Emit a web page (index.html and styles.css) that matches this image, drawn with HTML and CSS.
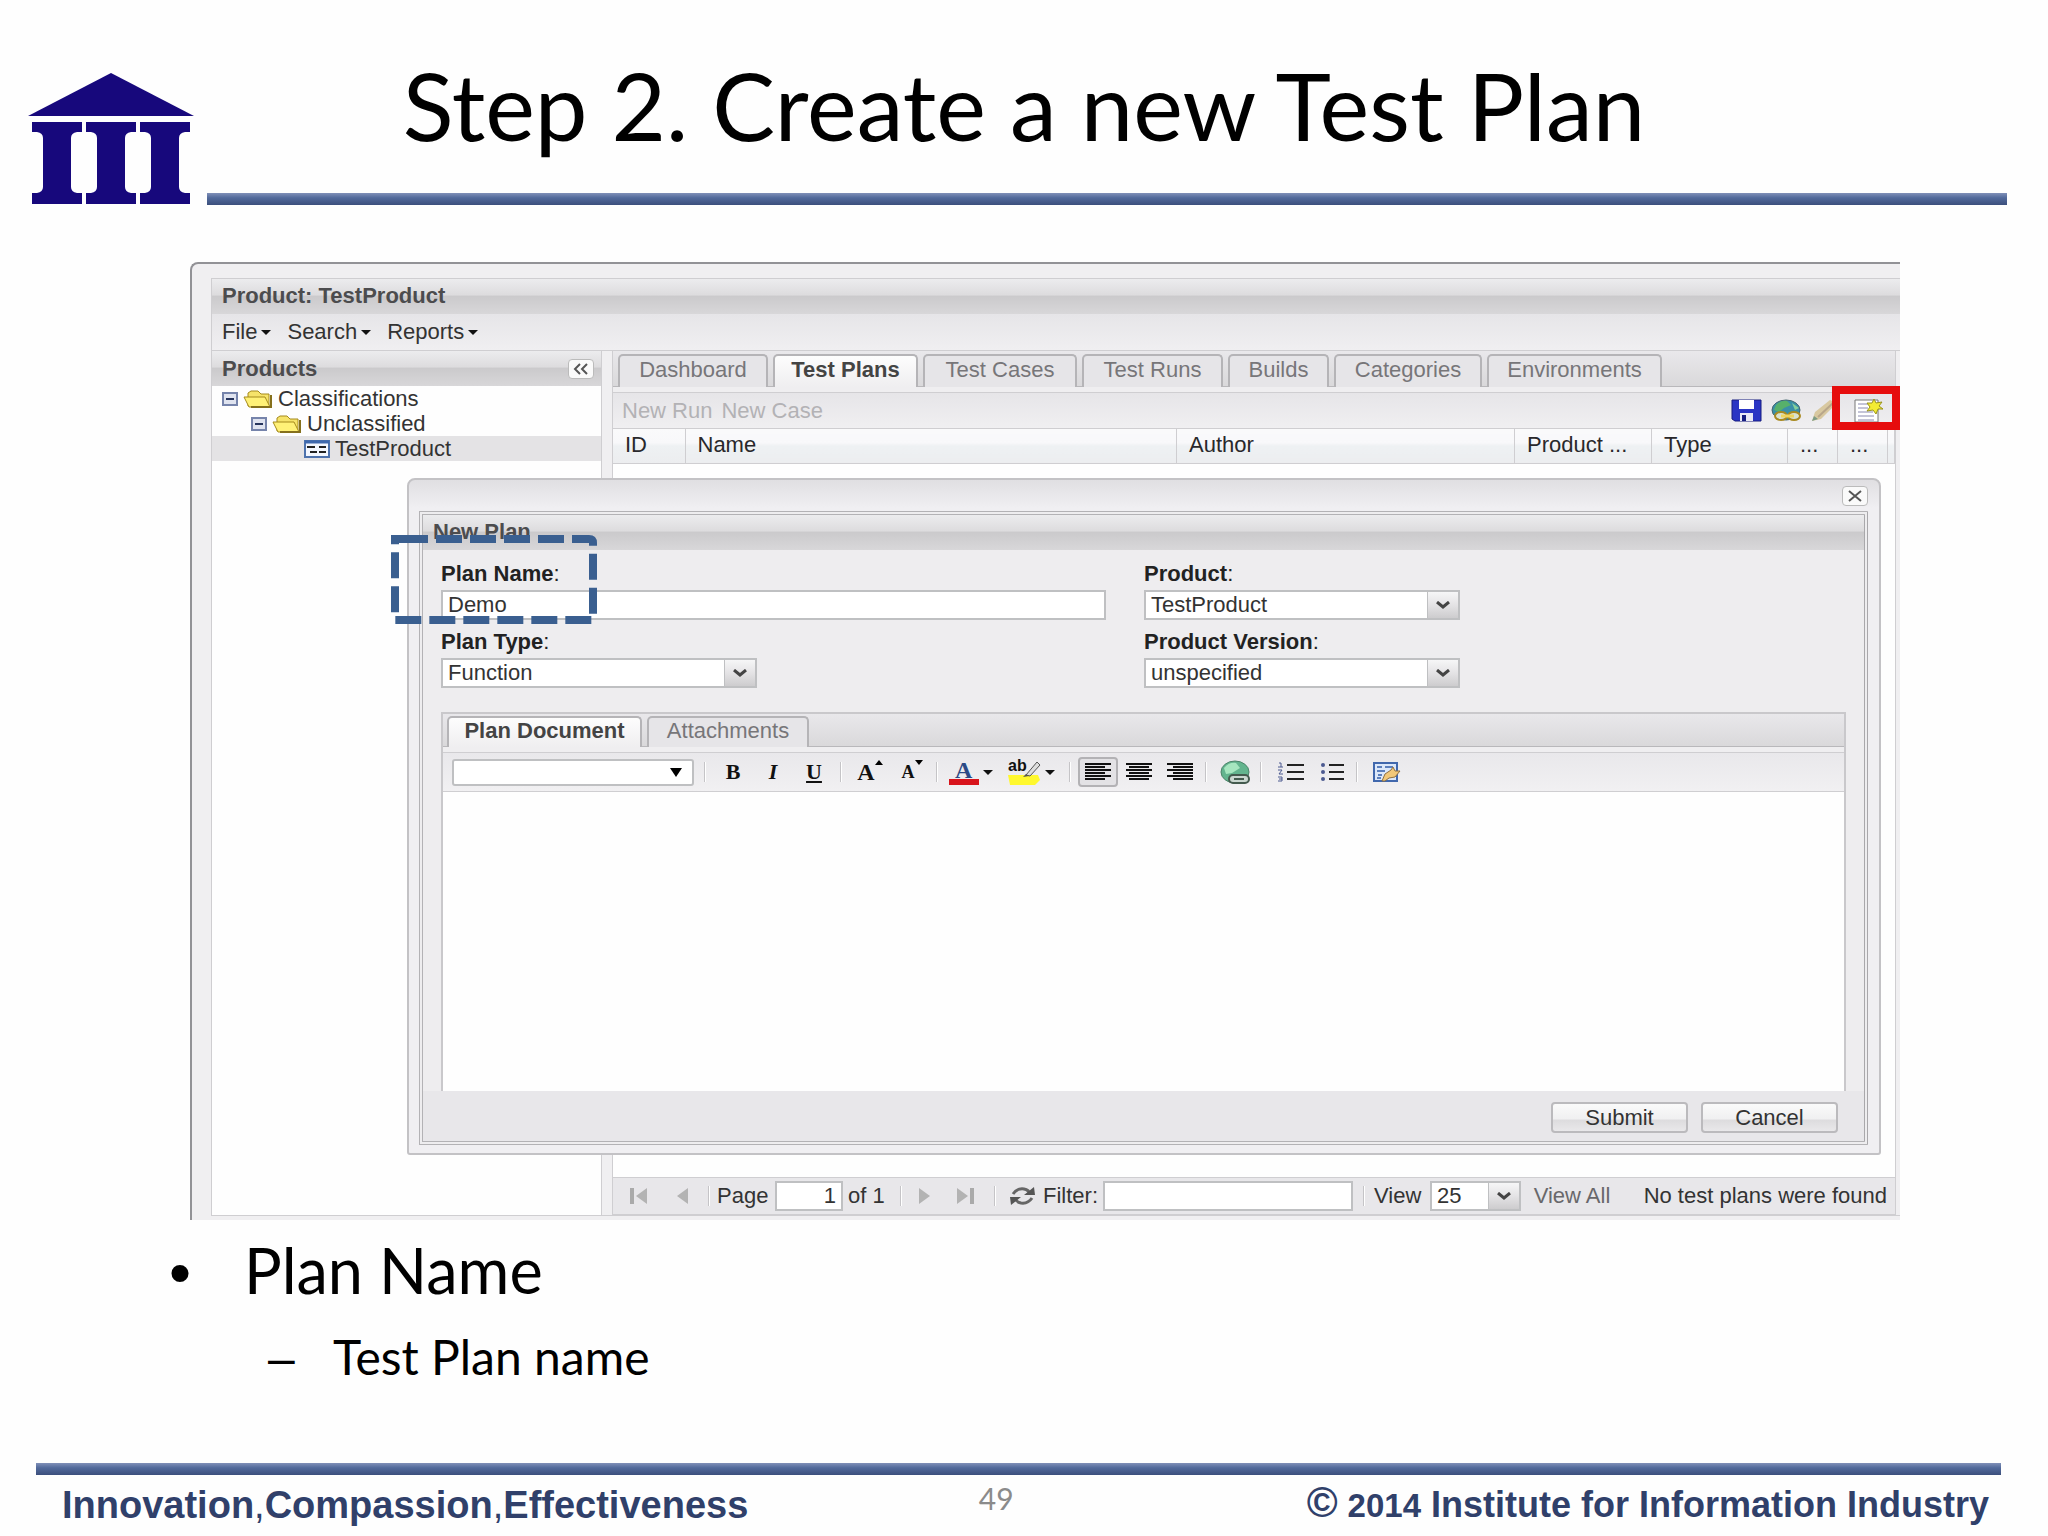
FILE: index.html
```html
<!DOCTYPE html>
<html lang="en">
<head>
    <meta charset="UTF-8">
    <meta name="viewport" content="width=device-width, initial-scale=1.0">
    <title>Step 2. Create a new Test Plan</title>
    <link rel="stylesheet" href="styles.css">
</head>
<body>
    <div class="slide">
        <header class="slide-header">
            <svg class="logo" viewBox="0 0 166 132" aria-label="III">
                <g fill="#17087c">
                    <path d="M83 0L166 43H0Z"/>
                    <path id="pillar" d="M4 49H54V59H49Q43 60 43 65V114Q43 119 49 120H54V131H4V120H9Q15 119 15 114V65Q15 60 9 59H4Z"/>
                    <use href="#pillar" x="54"/>
                    <use href="#pillar" x="108"/>
                </g>
            </svg>
            <h1>Step 2. Create a new Test Plan</h1>
            <div class="rule"></div>
        </header>

        <main class="app">
            <div class="app-inner">
                <h2 class="bar">Product: TestProduct</h2>
                <nav class="menu">
                    <button>File<i class="caret"></i></button>
                    <button>Search<i class="caret"></i></button>
                    <button>Reports<i class="caret"></i></button>
                </nav>
                <div class="columns">
                    <aside class="products">
                        <div class="bar products-bar">
                            <h3>Products</h3>
                            <button class="tool" aria-label="Collapse">
                                <svg width="16" height="14" viewBox="0 0 16 14"><path d="M7 2L2 7L7 12M14 2L9 7L14 12" fill="none" stroke="#555" stroke-width="2"/></svg>
                            </button>
                        </div>
                        <ul class="tree">
                            <li class="level-1">
                                <svg class="minus" width="16" height="14" viewBox="0 0 16 14"><path d="M1 1H15V13H1Z" fill="#dfe3ef" stroke="#7684ab" stroke-width="2"/><path d="M4 7H12" stroke="#26345c" stroke-width="2"/></svg>
                                <svg width="30" height="18" viewBox="0 0 30 18"><path d="M5 16V3L8 1H15L18 4H26V16Z" fill="#f6e36a" stroke="#a58a1c"/><path d="M1 7H22L27 17H6Z" fill="#fff177" stroke="#a58a1c"/><path d="M28 5V17H8" fill="none" stroke="#85701c" stroke-width="2"/></svg>
                                Classifications
                            </li>
                            <li class="level-2">
                                <svg class="minus" width="16" height="14" viewBox="0 0 16 14"><path d="M1 1H15V13H1Z" fill="#dfe3ef" stroke="#7684ab" stroke-width="2"/><path d="M4 7H12" stroke="#26345c" stroke-width="2"/></svg>
                                <svg width="30" height="18" viewBox="0 0 30 18"><path d="M5 16V3L8 1H15L18 4H26V16Z" fill="#f6e36a" stroke="#a58a1c"/><path d="M1 7H22L27 17H6Z" fill="#fff177" stroke="#a58a1c"/><path d="M28 5V17H8" fill="none" stroke="#85701c" stroke-width="2"/></svg>
                                Unclassified
                            </li>
                            <li class="level-3 selected">
                                <svg width="26" height="18" viewBox="0 0 26 18"><path d="M1 1H25V17H1Z" fill="#f3f7ff" stroke="#4d72ad" stroke-width="2"/><path d="M1 2H25" stroke="#3e68ad" stroke-width="3"/><path d="M3 7H11M6 12H13M15 7H22M15 12H22" stroke="#222" stroke-width="2"/></svg>
                                TestProduct
                            </li>
                        </ul>
                    </aside>

                    <section class="plans">
                        <div class="tabs">
                            <button>Dashboard</button>
                            <button class="active">Test Plans</button>
                            <button>Test Cases</button>
                            <button>Test Runs</button>
                            <button>Builds</button>
                            <button>Categories</button>
                            <button>Environments</button>
                        </div>
                        <div class="toolbar">
                            <button disabled>New Run</button>
                            <button disabled>New Case</button>
                            <span class="spacer"></span>
                            <button class="icon" aria-label="Save">
                                <svg width="31" height="23" viewBox="0 0 31 23"><path d="M1 1H30V22H4L1 20Z" fill="#2a35c4" stroke="#161d80"/><path d="M8 1H23V10H8Z" fill="#fff"/><path d="M9 14H22V22H9Z" fill="#e9e9f5"/><path d="M11 16H15V22H11Z" fill="#161d80"/></svg>
                            </button>
                            <button class="icon" aria-label="Link">
                                <svg width="31" height="23" viewBox="0 0 31 23"><ellipse cx="15" cy="11" rx="14" ry="10" fill="#3a8fa6" stroke="#44666e"/><path d="M5 6Q10 1 16 2L20 6L13 9L8 13L3 11Z" fill="#57b06a"/><path d="M21 4L28 9L24 11Z" fill="#85d09a"/><g fill="#d9e2d0" stroke="#a98920" stroke-width="2"><ellipse cx="10" cy="17" rx="6" ry="4"/><ellipse cx="23" cy="17" rx="6" ry="4"/></g><path d="M10 17H23" stroke="#efd45c" stroke-width="3"/></svg>
                            </button>
                            <button class="icon" aria-label="Edit">
                                <svg width="27" height="23" viewBox="0 0 27 23"><path d="M1 22L4 13L19 1L26 4L10 20Z" fill="#d8c8a0"/><path d="M1 22L3 17L7 20Z" fill="#7c9c86"/><path d="M7 18L22 4" stroke="#b8a68a" stroke-width="2"/></svg>
                            </button>
                            <button class="icon" aria-label="New plan">
                                <svg width="30" height="24" viewBox="0 0 30 24"><path d="M2 1H25V23H2Z" fill="#fff" stroke="#777"/><path d="M5 5H15M5 9H15M5 13H20M5 17H21M5 21H21" stroke="#8a8ab0"/><path d="M21 0L23 4L29 3L26 7L30 10L25 10L23 15L20 11L14 12L17 8L14 4L19 4Z" fill="#f3ec33" stroke="#99921c"/></svg>
                            </button>
                        </div>
                        <table class="grid">
                            <thead>
                                <tr>
                                    <th class="col-id">ID</th>
                                    <th>Name</th>
                                    <th class="col-author">Author</th>
                                    <th class="col-product">Product ...</th>
                                    <th class="col-type">Type</th>
                                    <th class="col-more">...</th>
                                    <th class="col-more">...</th>
                                    <th class="col-end"></th>
                                </tr>
                            </thead>
                        </table>
                        <div class="pager">
                            <button aria-label="First page"><svg width="18" height="16" viewBox="0 0 18 16"><path d="M2 0V16" stroke="#aaa" stroke-width="4"/><path d="M17 0V16L6 8Z" fill="#b3b3b3"/></svg></button>
                            <button aria-label="Previous page"><svg width="12" height="16" viewBox="0 0 12 16"><path d="M11 0V16L0 8Z" fill="#b3b3b3"/></svg></button>
                            <span class="sep"></span>
                            <label for="page">Page</label>
                            <input id="page" class="page" type="text" value="1">
                            <span class="of">of 1</span>
                            <span class="sep"></span>
                            <button aria-label="Next page"><svg width="12" height="16" viewBox="0 0 12 16"><path d="M1 0V16L12 8Z" fill="#b3b3b3"/></svg></button>
                            <button aria-label="Last page"><svg width="18" height="16" viewBox="0 0 18 16"><path d="M16 0V16" stroke="#aaa" stroke-width="4"/><path d="M1 0V16L12 8Z" fill="#b3b3b3"/></svg></button>
                            <span class="sep"></span>
                            <button aria-label="Refresh"><svg width="27" height="20" viewBox="0 0 27 20"><g fill="none" stroke="#666" stroke-width="3"><path d="M4 8Q8 2 15 3Q20 4 21 8"/><path d="M23 12Q19 18 12 17Q7 16 6 12"/></g><path d="M15 9H26L25 1Z" fill="#555"/><path d="M12 11H1L2 19Z" fill="#555"/></svg></button>
                            <label for="filter">Filter:</label>
                            <input id="filter" type="text">
                            <span class="sep"></span>
                            <label for="view">View</label>
                            <div class="combo">
                                <select id="view"><option>25</option></select>
                                <span class="trigger"><svg width="16" height="9" viewBox="0 0 16 9"><path d="M2 1L8 6L14 1" fill="none" stroke="#444" stroke-width="3"/></svg></span>
                            </div>
                            <button class="view-all">View All</button>
                            <span class="status">No test plans were found</span>
                        </div>
                    </section>
                </div>
            </div>

            <div class="dialog" role="dialog" aria-labelledby="dialog-title">
                <div class="dialog-head">
                    <button class="tool" aria-label="Close">
                        <svg width="14" height="12" viewBox="0 0 14 12"><path d="M1 1L13 11M13 1L1 11" stroke="#555" stroke-width="2"/></svg>
                    </button>
                </div>
                <form class="dialog-body">
                    <h2 class="bar" id="dialog-title">New Plan</h2>
                    <div class="fields">
                        <div class="field">
                            <label for="plan-name"><b>Plan Name</b>:</label>
                            <input id="plan-name" type="text" value="Demo">
                        </div>
                        <div class="field">
                            <label for="product"><b>Product</b>:</label>
                            <div class="combo">
                                <select id="product"><option>TestProduct</option></select>
                                <span class="trigger"><svg width="16" height="9" viewBox="0 0 16 9"><path d="M2 1L8 6L14 1" fill="none" stroke="#444" stroke-width="3"/></svg></span>
                            </div>
                        </div>
                        <div class="field">
                            <label for="plan-type"><b>Plan Type</b>:</label>
                            <div class="combo">
                                <select id="plan-type"><option>Function</option></select>
                                <span class="trigger"><svg width="16" height="9" viewBox="0 0 16 9"><path d="M2 1L8 6L14 1" fill="none" stroke="#444" stroke-width="3"/></svg></span>
                            </div>
                        </div>
                        <div class="field">
                            <label for="version"><b>Product Version</b>:</label>
                            <div class="combo">
                                <select id="version"><option>unspecified</option></select>
                                <span class="trigger"><svg width="16" height="9" viewBox="0 0 16 9"><path d="M2 1L8 6L14 1" fill="none" stroke="#444" stroke-width="3"/></svg></span>
                            </div>
                        </div>
                    </div>

                    <div class="document">
                        <div class="tabs">
                            <button type="button" class="active">Plan Document</button>
                            <button type="button">Attachments</button>
                        </div>
                        <div class="editor-bar">
                            <div class="font-combo">
                                <select aria-label="Font"><option></option></select>
                                <svg width="12" height="9" viewBox="0 0 12 9"><path d="M0 0H12L6 9Z"/></svg>
                            </div>
                            <span class="sep"></span>
                            <button type="button" class="letter">B</button>
                            <button type="button" class="letter"><em>I</em></button>
                            <button type="button" class="letter"><u>U</u></button>
                            <span class="sep"></span>
                            <button type="button" class="letter big" aria-label="Grow font">A<svg width="8" height="5" viewBox="0 0 8 5"><path d="M0 5H8L4 0Z"/></svg></button>
                            <button type="button" class="letter small" aria-label="Shrink font">A<svg width="8" height="5" viewBox="0 0 8 5"><path d="M0 0H8L4 5Z"/></svg></button>
                            <span class="sep"></span>
                            <button type="button" aria-label="Font color">
                                <svg width="30" height="30" viewBox="0 0 30 30"><text x="6" y="21" class="glyph-serif">A</text><path d="M0 22H30V28H0Z" fill="#d8141c"/></svg><i class="caret"></i>
                            </button>
                            <button type="button" aria-label="Highlight color">
                                <svg width="33" height="32" viewBox="0 0 33 32"><path d="M0 19H30L32 24L27 29H2Z" fill="#fff82e"/><text x="0" y="15" class="glyph-sans">ab</text><path d="M18 19L29 6L32 9L22 20Z" fill="#ddd" stroke="#555"/><path d="M15 21L18 18L21 20Z" fill="#555"/></svg><i class="caret"></i>
                            </button>
                            <span class="sep"></span>
                            <button type="button" class="pressed" aria-label="Align left"><svg width="26" height="18" viewBox="0 0 26 18"><path d="M0 1H26M0 4H20M0 7H26M0 10H20M0 13H26M0 16H20" stroke="#111" stroke-width="2"/></svg></button>
                            <button type="button" aria-label="Align center"><svg width="26" height="18" viewBox="0 0 26 18"><path d="M0 1H26M3 4H23M0 7H26M3 10H23M0 13H26M3 16H23" stroke="#111" stroke-width="2"/></svg></button>
                            <button type="button" aria-label="Align right"><svg width="26" height="18" viewBox="0 0 26 18"><path d="M0 1H26M6 4H26M0 7H26M6 10H26M0 13H26M6 16H26" stroke="#111" stroke-width="2"/></svg></button>
                            <span class="sep"></span>
                            <button type="button" aria-label="Insert link"><svg width="30" height="24" viewBox="0 0 30 24"><ellipse cx="15" cy="12" rx="14" ry="11" fill="#63b48e" stroke="#4b8469"/><path d="M4 8Q9 2 16 3L20 8L12 13L6 14Z" fill="#a6e6bf"/><rect x="9" y="15" width="20" height="8" rx="4" fill="#c9d6cf" stroke="#445a4e" stroke-width="2"/><path d="M14 19H24" stroke="#445a4e" stroke-width="2"/></svg></button>
                            <span class="sep"></span>
                            <button type="button" aria-label="Numbered list"><svg width="27" height="20" viewBox="0 0 27 20"><path d="M10 3H27M10 10H27M10 17H27" stroke="#222" stroke-width="2"/><path d="M2 1H4V5M1 5H6M1 8H5L2 12H6M1 15H5V19H1M2 17H5" fill="none" stroke="#4c5a90"/></svg></button>
                            <button type="button" aria-label="Bulleted list"><svg width="24" height="20" viewBox="0 0 24 20"><path d="M9 3H24M9 10H24M9 17H24" stroke="#222" stroke-width="2"/><g fill="#4c5a90"><circle cx="3" cy="3" r="2"/><circle cx="3" cy="10" r="2"/><circle cx="3" cy="17" r="2"/></g></svg></button>
                            <span class="sep"></span>
                            <button type="button" aria-label="Edit source"><svg width="28" height="20" viewBox="0 0 28 20"><path d="M1 1H24V19H1Z" fill="#dce8fa" stroke="#4168ad" stroke-width="2"/><path d="M4 5H9M12 5H20M4 9H12M5 13H9M4 16H8" stroke="#5d80bd" stroke-width="2"/><path d="M9 19L12 12L18 8L20 5L22 9L27 9L22 15L16 16L12 19Z" fill="#f2c878" stroke="#8f7040"/></svg></button>
                        </div>
                        <textarea aria-label="Plan document"></textarea>
                    </div>
                    <div class="actions">
                        <button type="button">Submit</button>
                        <button type="button">Cancel</button>
                    </div>
                </form>
            </div>

            <!-- callouts drawn over the application -->
            <div class="callout-new"></div>
            <svg class="callout-name" viewBox="0 0 206 90">
                <path d="M11 4H198Q202 4 202 8V85H4V4H11" fill="none" stroke="#3a5f90" stroke-width="8" stroke-dasharray="26 8"/>
            </svg>
        </main>

        <ul class="notes">
            <li>Plan Name
                <ul>
                    <li>Test Plan name</li>
                </ul>
            </li>
        </ul>

        <footer class="slide-footer">
            <div class="rule"></div>
            <div class="footer-row">
                <p class="motto">Innovation<span>,</span>Compassion<span>,</span>Effectiveness</p>
                <p class="number">49</p>
                <p class="owner"><span class="copy">©</span> <span class="year">2014</span> Institute for Information Industry</p>
            </div>
        </footer>
    </div>
</body>
</html>
```
FILE: styles.css
```css
* {
    box-sizing: border-box;
}

body {
    margin: 0;
    background-color: #fefefe;
    color: #000;
    font-family: Lato, sans-serif;
}

h1, h2, h3, p, ul {
    margin: 0;
    padding: 0;
}

svg {
    display: block;
    flex: none;
}

.slide {
    display: flex;
    flex-direction: column;
    min-height: 100vh;
}

.slide-header {
    display: grid;
    grid-template-columns: 166px 1fr 153px;
    grid-template-rows: 193px 12px;
    column-gap: 13px;
    padding: 0 41px 0 28px;
}

.logo {
    grid-row: 1 / 3;
    align-self: end;
    width: 100%;
}

.slide-header h1 {
    padding-top: 52px;
    font-size: 94px;
    line-height: 106px;
    font-weight: 400;
    text-align: center;
    white-space: nowrap;
}

.rule {
    height: 12px;
    background: linear-gradient(#8090b8, #526a9b 40%, #3c4f7c);
}

.slide-header .rule {
    grid-column: 2 / 4;
}

/* application */
.app {
    position: relative;
    flex: 1;
    display: flex;
    margin: 57px 148px 0 190px;
    padding: 14px 0 4px 19px;
    border: solid #929296;
    border-width: 2px 0 0 2px;
    border-top-left-radius: 8px;
    background-color: #f0eff1;
    color: #333;
    font-family: "Liberation Sans", sans-serif;
    font-size: 22px;
    line-height: 24px;
    overflow: hidden;
}

.app button,
.app input,
.app select,
.app textarea {
    margin: 0;
    padding: 0;
    border: none;
    border-radius: 0;
    background: none;
    color: inherit;
    font: inherit;
}

.app button {
    display: flex;
    align-items: center;
    justify-content: center;
    white-space: nowrap;
}

.app-inner {
    flex: 1;
    display: flex;
    flex-direction: column;
    border: 1px solid #cfced1;
    border-right: none;
}

.bar {
    height: 35px;
    padding-left: 10px;
    background: linear-gradient(#ececee, #dddcde 45%, #cbcacc 50%, #d8d7d9);
    color: #4c4c4e;
    font-size: 22px;
    line-height: 34px;
    font-weight: 700;
}

.menu {
    display: flex;
    gap: 16px;
    height: 37px;
    padding-left: 10px;
    background: linear-gradient(#e6e5e8, #f0eff1);
    border-bottom: 1px solid #cfced1;
}

.caret {
    margin-left: 4px;
    border: 5px solid transparent;
    border-top-color: #111;
    border-bottom: none;
}

.columns {
    flex: 1;
    display: flex;
    gap: 10px;
}

.products {
    width: 390px;
    background-color: #fefefe;
    border-right: 1px solid #cfced1;
}

.products-bar {
    display: flex;
    align-items: center;
    justify-content: space-between;
    padding-right: 7px;
}

.products-bar h3 {
    font-size: 22px;
}

.app .tool {
    width: 26px;
    height: 20px;
    border: 1px solid #bbb;
    border-radius: 4px;
    background-color: #fafafa;
}

.tree {
    list-style: none;
}

.tree li {
    display: flex;
    align-items: center;
    gap: 5px;
    height: 25px;
}

.level-1 {
    padding-left: 10px;
}

.level-2 {
    padding-left: 39px;
}

.level-3 {
    padding-left: 92px;
}

.selected {
    background-color: #e4e3e5;
}

.plans {
    flex: 1;
    display: flex;
    flex-direction: column;
    margin-right: 4px;
    border: solid #cfced1;
    border-width: 0 1px;
    background-color: #fefefe;
}

.tabs {
    display: grid;
    grid-template-columns: 150px 145px 154px 141px 101px 148px 175px;
    gap: 5px;
    height: 41px;
    padding: 3px 5px 0;
    background: linear-gradient(#e9e8eb, #d9d8da);
    border-bottom: 5px solid #efeef0;
    box-shadow: inset 0 -1px #b9b8bb;
}

.app .tabs button {
    padding-bottom: 3px;
    border: 2px solid #b5b4b7;
    border-bottom: none;
    border-radius: 5px 5px 0 0;
    background-color: #e6e5e8;
    color: #777679;
}

.app .tabs .active {
    background: linear-gradient(#fdfdfd, #efeef0);
    color: #444;
    font-weight: 700;
}

.toolbar {
    display: flex;
    align-items: center;
    gap: 9px;
    height: 37px;
    padding: 0 12px 0 9px;
    background: linear-gradient(#e6e5e8, #f0eff1);
    border: solid #cfced1;
    border-width: 1px 0;
}

.toolbar button:disabled {
    color: #b3b2b5;
}

.spacer {
    flex: 1;
}

.toolbar .icon:last-child {
    margin-left: 6px;
}

.grid {
    width: 100%;
    table-layout: fixed;
    border-collapse: collapse;
    margin-bottom: auto;
}

.grid th {
    height: 34px;
    padding: 0 0 2px 12px;
    background: linear-gradient(#fafafb, #f8f8fa 40%, #eef1f3 50%, #ecedef);
    border: solid #cfced1;
    border-width: 0 1px 1px 0;
    color: #29282b;
    font-weight: 400;
    text-align: left;
    white-space: nowrap;
}

.grid .col-id {
    width: 72px;
}

.grid .col-author {
    width: 338px;
}

.grid .col-product {
    width: 137px;
}

.grid .col-type {
    width: 136px;
}

.grid .col-more {
    width: 50px;
}

.grid .col-end {
    width: 7px;
    padding: 0;
}

.pager {
    display: grid;
    grid-template-columns: 51px 37px 16px 58px 68px 52px 12px 34px 48px 12px 42px 60px minmax(100px, 1fr) 21px 56px 91px 102px 272px;
    align-items: center;
    height: 38px;
    background-color: #e8e7ea;
    border: solid #cfced1;
    border-width: 1px 0;
}

.sep {
    justify-self: center;
    width: 2px;
    height: 20px;
    background-color: #c5c4c7;
    border-right: 1px solid #fff;
}

.app input {
    height: 30px;
    padding: 0 5px;
    border: 2px solid #bfc0c2;
    background-color: #fff;
    min-width: 0;
}

.pager input {
    width: 100%;
}

.app .page {
    text-align: right;
}

.of {
    padding-left: 5px;
}

.app .view-all {
    color: #69686b;
}

.status {
    text-align: right;
    padding-right: 8px;
}

.combo {
    display: flex;
    height: 30px;
    border: 2px solid #bfc0c2;
    background-color: #fff;
}

.app .combo select {
    flex: 1;
    min-width: 0;
    padding: 0 5px;
    appearance: none;
}

.trigger {
    display: flex;
    align-items: center;
    justify-content: center;
    width: 31px;
    background: linear-gradient(#f6f6f7, #e4e3e5 50%, #cdccce);
    border-left: 1px solid #bfc0c2;
}

/* new plan dialog */
.dialog {
    position: absolute;
    top: 214px;
    right: 19px;
    bottom: 65px;
    left: 215px;
    display: flex;
    flex-direction: column;
    padding: 0 11px 8px 10px;
    border: 2px solid #c3c2c5;
    border-radius: 8px 8px 3px 3px;
    background: linear-gradient(#e0dfe2, #f0eff2 28px);
}

.dialog-head {
    display: flex;
    justify-content: flex-end;
    align-items: center;
    height: 31px;
}

.dialog-body {
    flex: 1;
    display: flex;
    flex-direction: column;
    border: 4px double #b3b2b5;
    border-right-color: #a9a8ab;
    background-color: #eeedef;
}

.fields {
    display: grid;
    grid-template-columns: 665px 316px;
    column-gap: 38px;
    row-gap: 9px;
    padding: 11px 18px 24px;
}

.field label {
    display: block;
    height: 29px;
    line-height: 26px;
    color: #222;
}

.field input {
    display: block;
    width: 100%;
}

.field .combo {
    width: 316px;
}

.document {
    flex: 1;
    display: flex;
    flex-direction: column;
    margin: 0 18px;
    border: 2px solid #c9c8cb;
    border-bottom: none;
}

.document .tabs {
    grid-template-columns: 195px 162px;
    height: 38px;
    padding: 2px 4px 0;
}

.editor-bar {
    display: grid;
    grid-template-columns: 242px 22px 34px 46px 36px 18px 40px 44px 6px 61px 61px 16px 40px 42px 40px 12px 46px 6px 52px 32px 18px 42px;
    align-items: center;
    height: 40px;
    padding-left: 9px;
    background: linear-gradient(#e9e8eb, #f1f0f2);
    border: solid #cfced1;
    border-width: 1px 0;
}

.font-combo {
    display: flex;
    align-items: center;
    height: 27px;
    padding-right: 10px;
    border: 2px solid #bfc0c2;
    border-radius: 3px;
    background-color: #fff;
}

.app .font-combo select {
    flex: 1;
    appearance: none;
}

.app .letter {
    color: #111;
    font-family: "Liberation Serif", serif;
    font-size: 22px;
    font-weight: 700;
}

.app .big {
    font-size: 24px;
}

.app .small {
    font-size: 18px;
}

.letter svg {
    align-self: flex-start;
}

.glyph-serif {
    fill: #2c4a86;
    font: bold 24px "Liberation Serif", serif;
}

.glyph-sans {
    fill: #111;
    font: bold 16px "Liberation Sans", sans-serif;
}

.app .pressed {
    height: 30px;
    border: 2px solid #b3b2b5;
    border-radius: 4px;
    background-color: #e3e2e5;
}

.app textarea {
    flex: 1;
    width: 100%;
    background-color: #fefefe;
    resize: none;
}

.actions {
    display: flex;
    justify-content: flex-end;
    gap: 13px;
    padding: 11px 26px 8px 0;
    background-color: #e8e7ea;
}

.app .actions button {
    width: 137px;
    height: 31px;
    border: 2px solid #bbbabd;
    border-radius: 4px;
    background: linear-gradient(#fafafa, #f0f0f1 55%, #dddcde 60%, #e9e8ea);
}

/* callouts */
.callout-new {
    position: absolute;
    top: 122px;
    right: 0;
    width: 68px;
    height: 44px;
    border: 8px solid #e60d0d;
}

.callout-name {
    position: absolute;
    top: 271px;
    left: 199px;
    width: 206px;
}

/* notes */
.notes {
    padding: 13px 0 0 169px;
    font-size: 63px;
    line-height: 74px;
    list-style: none;
    height: 243px;
}

.notes > li::before {
    content: "•";
    display: inline-block;
    width: 75px;
    font-family: "Liberation Sans", sans-serif;
}

.notes ul {
    padding: 8px 0 0 99px;
    font-size: 48px;
    line-height: 80px;
    list-style: none;
}

.notes ul li::before {
    content: "–";
    display: inline-block;
    width: 65px;
    font-family: "Liberation Sans", sans-serif;
}

/* slide footer */
.slide-footer {
    padding: 0 47px 0 36px;
}

.footer-row {
    display: grid;
    grid-template-columns: 47fr auto 50fr;
    align-items: center;
    height: 61px;
    padding: 0 12px 2px 26px;
    color: #30406a;
    font-family: "Liberation Sans", sans-serif;
    font-size: 38px;
    line-height: 44px;
    font-weight: 700;
    white-space: nowrap;
}

.motto span {
    font-weight: 400;
}

.number {
    padding-bottom: 14px;
    color: #8b8b8b;
    font-family: Lato, sans-serif;
    font-size: 30px;
    font-weight: 400;
}

.owner {
    text-align: right;
    font-size: 36px;
}

.copy {
    font-size: 42px;
}

.year {
    font-size: 33px;
}
```
